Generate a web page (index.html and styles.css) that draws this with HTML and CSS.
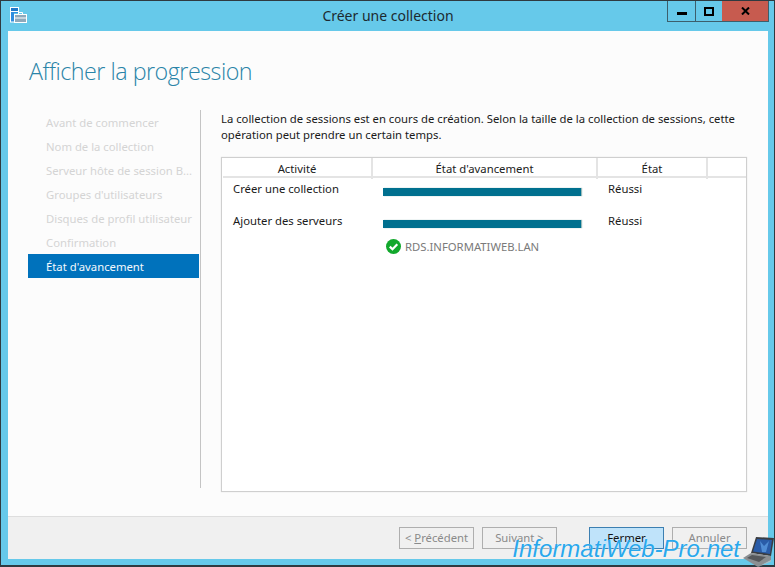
FILE: index.html
```html
<!DOCTYPE html>
<html lang="fr">
<head>
<meta charset="utf-8">
<title>Créer une collection</title>
<link rel="stylesheet" href="styles.css">
</head>
<body>
<div class="window">
  <header class="titlebar">
    <svg class="app-icon" width="17" height="16" viewBox="0 0 17 16">
      <rect x="0" y="0" width="9" height="15.500" fill="#fff"/>
      <rect x="1" y="1" width="7" height="3" fill="#1f78c8"/>
      <rect x="1" y="5" width="7" height="9.500" fill="#2f8ee0"/>
      <rect x="4" y="6" width="13" height="10" fill="#66c9ea"/>
      <path d="M8.500 7.500v-2h4v2" fill="none" stroke="#fff"/>
      <rect x="4.500" y="7.500" width="12" height="8" fill="#8fa9bb" stroke="#fff"/>
      <rect x="5" y="10.500" width="11" height="1" fill="#fff"/>
    </svg>
    <div class="title">Créer une collection</div>
    <div class="controls">
      <div class="ctl ctl-min"><span class="min-glyph"></span></div>
      <div class="ctl ctl-max"><span class="max-glyph"></span></div>
      <div class="ctl ctl-close"><svg width="9" height="8" viewBox="0 0 9 8"><path d="M1 .5l7 7M8 .5l-7 7" stroke="#000" stroke-width="2" fill="none"/></svg></div>
    </div>
  </header>
  <main class="client">
    <div class="content">
      <h1 class="heading">Afficher la progression</h1>
      <div class="columns">
        <nav class="steps">
          <div class="step">Avant de commencer</div>
          <div class="step">Nom de la collection</div>
          <div class="step">Serveur hôte de session B...</div>
          <div class="step">Groupes d'utilisateurs</div>
          <div class="step">Disques de profil utilisateur</div>
          <div class="step">Confirmation</div>
          <div class="step step-active">État d'avancement</div>
        </nav>
        <section class="panel">
          <p class="intro">La collection de sessions est en cours de création. Selon la taille de la collection de sessions, cette opération peut prendre un certain temps.</p>
          <div class="list">
            <div class="list-head">
              <div class="th">Activité</div>
              <div class="th">État d'avancement</div>
              <div class="th">État</div>
              <div class="th th-extra"></div>
            </div>
            <div class="row">
              <div class="cell-activity">Créer une collection</div>
              <div class="cell-progress"><div class="bar"></div></div>
              <div class="cell-state">Réussi</div>
            </div>
            <div class="row">
              <div class="cell-activity">Ajouter des serveurs</div>
              <div class="cell-progress"><div class="bar"></div></div>
              <div class="cell-state">Réussi</div>
            </div>
            <div class="server">
              <svg width="15" height="15" viewBox="0 0 15 15"><circle cx="7.500" cy="7.500" r="7.500" fill="#12a82c"/><path d="M3.800 7.600l2.700 2.700 4.800-5" fill="none" stroke="#fff" stroke-width="2.200"/></svg>
              <span>RDS.INFORMATIWEB.LAN</span>
            </div>
          </div>
        </section>
      </div>
    </div>
    <footer class="footer">
      <div class="btn btn-off">&lt; <u>P</u>récédent</div>
      <div class="btn btn-off btn-next">Suivant &gt;</div>
      <div class="btn btn-primary">Fermer</div>
      <div class="btn btn-off">Annuler</div>
    </footer>
  </main>
  <div class="watermark">
    <span class="wm-text">InformatiWeb-Pro.net</span>
    <svg class="wm-laptop" width="32" height="31" viewBox="0 0 32 31">
      <path d="M13 1l18 1-3 18-20-3z" fill="#3a3d42"/>
      <path d="M14 3l15 1-2 14-17-2.500z" fill="#2a5ca8"/>
      <path d="M17 5l4 5 5-5-3 11-4 0z" fill="#5a9ae0" opacity=".8"/>
      <path d="M0 22l8-5 20 3 0 4-13 7z" fill="#8b8f92"/>
      <path d="M4 22l5-3 14 2-7 5z" fill="#55585b"/>
      <path d="M0 22l15 9 13-7 0 1.500-13 5.500z" fill="#b4b8ba"/>
    </svg>
  </div>
</div>
</body>
</html>
```
FILE: styles.css
```css
* { box-sizing: border-box; }
html, body { margin: 0; padding: 0; }
body {
  width: 775px;
  height: 567px;
  overflow: hidden;
  font-family: "Noto Sans", "Open Sans", sans-serif;
  font-size: 11.3px;
  color: #1a1a1a;
}
.window {
  position: relative;
  width: 775px;
  height: 567px;
  background: #66c9ea;
  border: 1px solid #2f3a40;
  border-width: 1px 1px 2px 1px;
  display: flex;
  flex-direction: column;
  padding: 0 6px 6px 7px;
}
.titlebar {
  height: 30px;
  flex: none;
  display: grid;
  grid-template-columns: 1fr auto 1fr;
  position: relative;
}
.app-icon { margin: 6px 0 0 2px; }
.title {
  font-size: 14px;
  line-height: 30px;
  color: #1c2a30;
}
.controls {
  justify-self: end;
  display: flex;
  height: 21px;
  align-items: stretch;
  margin-right: -1px;
  border: 1px solid #3c5f6c;
  border-top: 0;
}
.ctl { display: flex; align-items: center; justify-content: center; }
.ctl-min { width: 28px; border-right: 1px solid #3c5f6c; }
.ctl-max { width: 26px; }
.ctl-close { width: 46px; background: #c75b4f; }
.min-glyph { width: 10px; height: 3px; background: #000; margin-top: 5px; }
.max-glyph { width: 10px; height: 9px; border: 2px solid #000; }
.client {
  flex: 1;
  min-height: 0;
  background: #fcfcfc;
  display: flex;
  flex-direction: column;
}
.content {
  flex: 1;
  min-height: 0;
  display: flex;
  flex-direction: column;
  padding: 22px 20px 28px 20px;
}
.heading {
  margin: 0;
  padding-left: 1px;
  font-family: "Open Sans", "Noto Sans", sans-serif;
  font-weight: 300;
  font-size: 23.3px;
  letter-spacing: -0.5px;
  line-height: 36px;
  color: #2a84a8;
}
.columns {
  flex: 1;
  min-height: 0;
  margin-top: 21px;
  display: flex;
}
.steps {
  width: 173px;
  flex: none;
  border-right: 1px solid #c4c4c4;
  padding-right: 1px;
}
.step {
  height: 24px;
  line-height: 24px;
  padding: 1px 0 0 18px;
  color: #d4d4d4;
  white-space: nowrap;
}
.step-active { background: #0072bc; color: #f4f9fd; }
.panel {
  flex: 1;
  min-width: 0;
  display: flex;
  flex-direction: column;
  padding: 1px 0 0 20px;
}
.intro {
  margin: 0 0 14px 0;
  line-height: 16px;
  color: #1a1a1a;
  width: 525px;
}
.list {
  flex: 1;
  min-height: 0;
  width: 526px;
  margin-bottom: -4px;
  background: #fff;
  border: 1px solid #cfcfcf;
  box-shadow: 0 0 1px #ddd;
}
.list-head {
  display: grid;
  grid-template-columns: 150px 225px 110px 1fr;
  height: 20px;
  margin-left: 1px;
  border-bottom: 2px solid #e4e4e4;
}
.th {
  text-align: center;
  line-height: 21px;
  border-right: 2px solid #e4e4e4;
  color: #222;
}
.th-extra { border-right: 0; }
.row {
  display: grid;
  grid-template-columns: 150px 225px 1fr;
  height: 32px;
  color: #1a1a1a;
}
.cell-activity { padding-left: 11px; line-height: 21px; }
.cell-progress { padding: 10px 15px 0 11px; }
.bar { height: 8px; background: #00708f; width: 198px; box-shadow: 1px 0 1px #9bb; }
.cell-state { padding-left: 11px; line-height: 21px; }
.server {
  display: flex;
  align-items: center;
  gap: 4px;
  margin: -6px 0 0 164px;
  height: 20px;
  color: #7a7a7a;
}
.footer {
  flex: none;
  height: 43px;
  background: #f0f0f0;
  border-top: 1px solid #dedede;
  display: flex;
  align-items: flex-start;
  gap: 8px;
  padding: 10px 21px 0 0;
  justify-content: flex-end;
}
.btn {
  width: 75px;
  height: 22px;
  line-height: 20px;
  text-align: center;
  border: 1px solid #aeaeae;
  background: #f0f0f0;
}
.btn-off { color: #8a8a8a; }
.btn-next { margin-right: 24px; }
.btn-primary { background: #bfe3fa; border-color: #3c7fb1; color: #111; }
.watermark {
  position: absolute;
  right: -1px;
  bottom: -2px;
  display: flex;
  align-items: flex-end;
  pointer-events: none;
}
.wm-text {
  font-family: "Liberation Sans", sans-serif;
  font-style: italic;
  font-size: 24px;
  line-height: 30px;
  color: #2aa8ec;
  margin-bottom: 3px;
  text-shadow: 0 0 1px #fff;
}
.wm-laptop { margin-left: 3px; }
```
